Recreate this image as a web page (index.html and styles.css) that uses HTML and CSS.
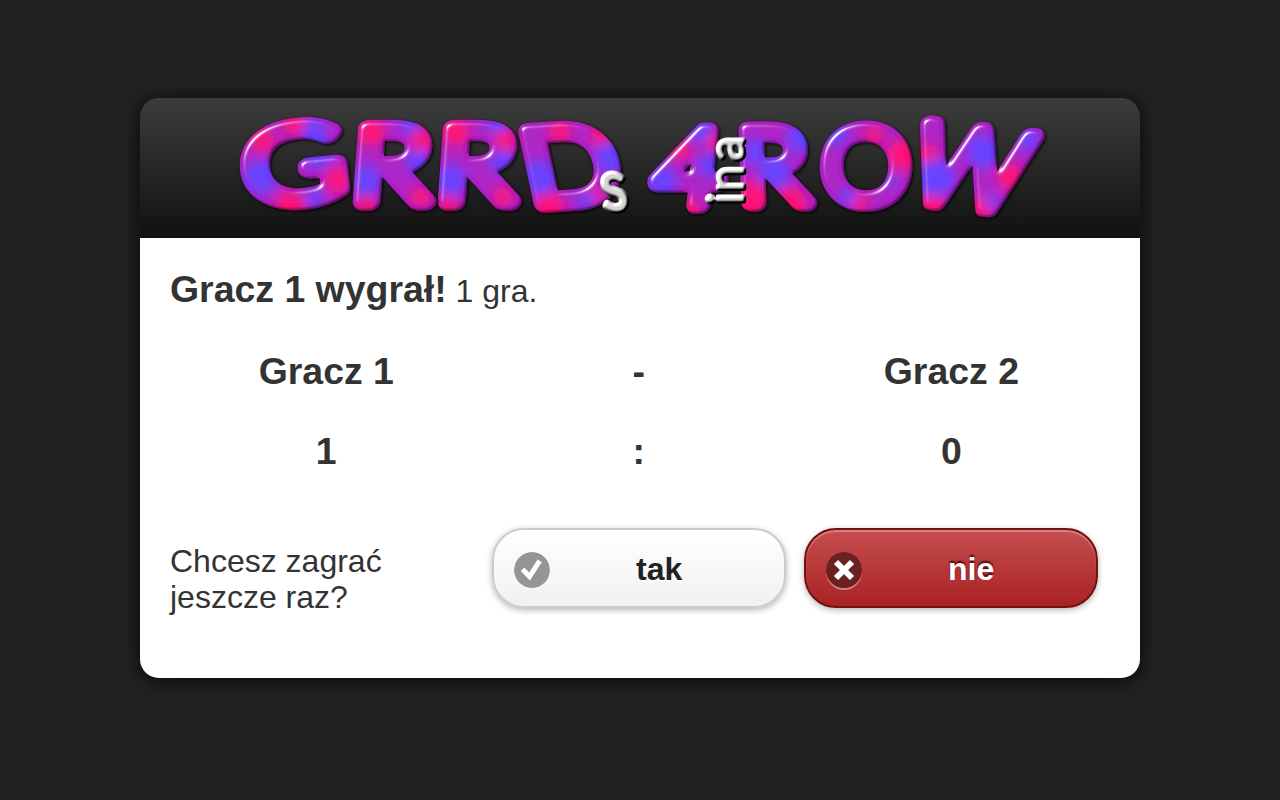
FILE: index.html
```html
<!DOCTYPE html>
<html lang="pl">
<head>
<meta charset="utf-8">
<title>GRRDs 4 in a ROW</title>
<link rel="stylesheet" href="styles.css">
</head>
<body>
<main class="dialog">
  <header class="dialog-header">
    <svg class="logo" viewBox="240 108 804 116" role="img" aria-label="GRRDs 4 in a ROW">
      <defs>
        <filter id="bevel" x="230" y="100" width="824" height="130" filterUnits="userSpaceOnUse" color-interpolation-filters="sRGB">
          <feGaussianBlur in="SourceAlpha" stdDeviation="2.4" result="soft"/>
          <feSpecularLighting in="soft" surfaceScale="5" specularConstant="1.15" specularExponent="28" lighting-color="#fff" result="shine">
            <feDistantLight azimuth="225" elevation="34"/>
          </feSpecularLighting>
          <feComposite in="shine" in2="SourceAlpha" operator="in" result="shineIn"/>
          <feGaussianBlur in="SourceAlpha" stdDeviation="1.5" result="edge"/>
          <feOffset in="edge" dx="-2" dy="-2" result="inset"/>
          <feComposite in="SourceAlpha" in2="inset" operator="out" result="rim"/>
          <feComponentTransfer in="rim" result="shade"><feFuncA type="linear" slope=".62" intercept="-.1"/></feComponentTransfer>
          <feOffset in="edge" dx="1" dy="1" result="shadow"/>
          <feMerge>
            <feMergeNode in="shadow"/><feMergeNode in="SourceGraphic"/><feMergeNode in="shade"/><feMergeNode in="shineIn"/>
          </feMerge>
        </filter>
        <filter id="metal" x="590" y="120" width="180" height="105" filterUnits="userSpaceOnUse" color-interpolation-filters="sRGB">
          <feGaussianBlur in="SourceAlpha" stdDeviation="1.6" result="soft"/>
          <feDiffuseLighting in="soft" surfaceScale="4" diffuseConstant="1.25" lighting-color="#fff" result="light">
            <feDistantLight azimuth="225" elevation="42"/>
          </feDiffuseLighting>
          <feComposite in="light" in2="SourceAlpha" operator="in"/>
        </filter>
        <filter id="mottle" x="-30%" y="-30%" width="160%" height="160%"><feGaussianBlur stdDeviation="6"/></filter>
        <mask id="lettersA" maskUnits="userSpaceOnUse" x="230" y="100" width="824" height="130">
          <g class="letter">
            <text transform="translate(298 201) rotate(-6) scale(1.36 1.02)">G</text>
            <text transform="translate(474 202) skewX(-4) scale(1.26 1.02)">R</text>
            <text transform="translate(686 205) skewX(-6) scale(1.15 1.02)">4</text>
            <text transform="translate(866 203) scale(1.08 1.01)">O</text>
          </g>
        </mask>
        <mask id="lettersB" maskUnits="userSpaceOnUse" x="230" y="100" width="824" height="130">
          <g class="letter">
            <text transform="translate(389 202) skewX(-4) scale(1.26 1.02)">R</text>
            <text transform="translate(578 202) rotate(-4) skewX(8) scale(1.21 1.02)">D</text>
            <text transform="translate(774 203) skewX(2) scale(1.14 1.01)">R</text>
            <text transform="translate(961 205) rotate(7) skewX(-9) scale(1.08 1.06)">W</text>
          </g>
        </mask>
        <g id="paint">
          <rect x="230" y="100" width="824" height="130" fill="#ac1fc4"/>
          <g filter="url(#mottle)">
            <g fill="#ff0874">
              <circle cx="262" cy="140" r="12"/><circle cx="294" cy="124" r="11"/><circle cx="338" cy="180" r="13"/><circle cx="290" cy="207" r="15"/>
              <circle cx="371" cy="132" r="14"/><circle cx="422" cy="140" r="11"/><circle cx="366" cy="207" r="10"/><circle cx="420" cy="197" r="10"/>
              <circle cx="455" cy="132" r="14"/><circle cx="505" cy="140" r="11"/><circle cx="448" cy="207" r="10"/><circle cx="503" cy="197" r="10"/>
              <circle cx="560" cy="132" r="11"/><circle cx="602" cy="134" r="11"/><circle cx="550" cy="209" r="15"/><circle cx="594" cy="197" r="10"/>
              <circle cx="680" cy="150" r="10"/><circle cx="713" cy="140" r="9"/><circle cx="688" cy="210" r="12"/><circle cx="752" cy="200" r="18"/>
              <circle cx="791" cy="204" r="16"/><circle cx="903" cy="155" r="16"/><circle cx="874" cy="135" r="9"/><circle cx="856" cy="203" r="11"/>
              <circle cx="929" cy="153" r="9"/><circle cx="932" cy="207" r="13"/><circle cx="1010" cy="177" r="13"/><circle cx="981" cy="207" r="12"/>
            </g>
            <g fill="#643cff">
              <circle cx="261" cy="177" r="17"/><circle cx="314" cy="131" r="12"/><circle cx="318" cy="153" r="15"/><circle cx="314" cy="198" r="9"/>
              <circle cx="366" cy="180" r="15"/><circle cx="410" cy="124" r="10"/><circle cx="418" cy="162" r="12"/><circle cx="452" cy="180" r="15"/>
              <circle cx="497" cy="124" r="10"/><circle cx="502" cy="162" r="12"/><circle cx="540" cy="177" r="17"/><circle cx="611" cy="157" r="16"/>
              <circle cx="587" cy="200" r="9"/><circle cx="662" cy="181" r="15"/><circle cx="701" cy="130" r="12"/><circle cx="710" cy="165" r="12"/>
              <circle cx="755" cy="151" r="13"/><circle cx="801" cy="138" r="15"/><circle cx="775" cy="173" r="16"/><circle cx="836" cy="135" r="11"/>
              <circle cx="848" cy="198" r="9"/><circle cx="892" cy="181" r="6"/><circle cx="936" cy="178" r="19"/><circle cx="983" cy="151" r="17"/>
              <circle cx="1028" cy="140" r="11"/><circle cx="990" cy="201" r="7"/>
            </g>
          </g>
        </g>
      </defs>
      <g filter="url(#bevel)"><use href="#paint" mask="url(#lettersA)"/></g>
      <g filter="url(#bevel)"><use href="#paint" mask="url(#lettersB)"/></g>
      <g class="small-letter" filter="url(#metal)">
        <text transform="translate(617 210) skewX(8) scale(1.1 1.26)">s</text>
        <text transform="translate(744 199) rotate(-90) scale(.9)">i</text>
        <text transform="translate(744 179) rotate(-90) scale(.85 .9)">n</text>
        <text transform="translate(744 149) rotate(-90) scale(.9)">a</text>
      </g>
    </svg>
  </header>
  <section class="dialog-body">
    <p class="result"><strong>Gracz 1 wygrał!</strong> 1 gra.</p>
    <div class="score">
      <span>Gracz 1</span><span>-</span><span>Gracz 2</span>
      <span>1</span><span>:</span><span>0</span>
    </div>
    <div class="actions">
      <p class="question">Chcesz zagrać jeszcze raz?</p>
      <button class="button button-yes" type="button">
        <svg class="icon" viewBox="0 0 36 36"><circle cx="18" cy="18" r="18" fill="#959595"/><path d="M8.5 17.2 15.5 24.5 25.7 8.8" fill="none" stroke="#fff" stroke-width="5"/></svg>
        tak
      </button>
      <button class="button button-no" type="button">
        <svg class="icon icon-no" viewBox="0 0 36 36"><circle cx="18" cy="18" r="18" fill="#6b2021"/><path d="m10 10 16 16M26 10 10 26" fill="none" stroke="#fff" stroke-width="6"/></svg>
        nie
      </button>
    </div>
  </section>
</main>
</body>
</html>
```
FILE: styles.css
```css
* { box-sizing: border-box; }

body {
  margin: 0;
  padding-top: 98px;
  min-height: 800px;
  background: #222;
  color: #333;
  font: 32px/36px "Liberation Sans", Arial, sans-serif;
}

p { margin: 0; }

.dialog {
  width: 1000px;
  height: 580px;
  margin: 0 auto;
  border-radius: 19px;
  background: linear-gradient(#3c3c3c, #111 140px, #fff 140px);
  box-shadow: 0 2px 20px rgba(0, 0, 0, .85);
  overflow: hidden;
}

.dialog-header {
  height: 140px;
  padding: 10px 96px 0 100px;
}

.logo { display: block; width: 804px; height: 116px; overflow: visible; }

.letter text {
  font: 300 102px Lato, sans-serif;
  text-anchor: middle;
  fill: #fff;
  stroke: #fff;
  stroke-width: 17px;
  stroke-linejoin: round;
}

.small-letter text {
  font: 400 56px Lato, sans-serif;
  text-anchor: middle;
  fill: #ccc;
  stroke: #ccc;
  stroke-width: 5px;
  stroke-linejoin: round;
}

.dialog-body { padding: 29px 30px 30px; }

.result { height: 64px; line-height: 44px; }
.result strong { font-size: 37.44px; }

.score {
  display: grid;
  grid-template-columns: repeat(3, 312.55px);
  grid-auto-rows: 80px;
  line-height: 80px;
  text-align: center;
  font-size: 37.44px;
  font-weight: bold;
}

.actions { display: flex; margin-top: 37px; }

.question { width: 322px; padding: 15px 60px 0 0; }

.button {
  position: relative;
  width: 294px;
  height: 80px;
  margin: 0 18px 0 0;
  padding: 2px 0 0 142px;
  border: 2px solid #ccc;
  border-radius: 32px;
  display: flex;
  align-items: center;
  font: bold 32px/40px "Liberation Sans", Arial, sans-serif;
  box-shadow: 0 2px 6px rgba(0, 0, 0, .3);
}

.button-yes {
  color: #222;
  background: linear-gradient(#fff, #f1f1f1);
  text-shadow: 0 2px 0 #fff;
}

.button-no {
  margin-right: 0;
  border-color: #74100f;
  color: #fff;
  background: linear-gradient(#c54e4f, #a92224);
  text-shadow: 0 -2px 2px #4d0505;
  box-shadow: inset 0 2px 1px rgba(255, 255, 255, .3), 0 2px 6px rgba(0, 0, 0, .3);
}

.icon {
  position: absolute;
  left: 20px;
  top: 22px;
  width: 36px;
  height: 36px;
  border-radius: 50%;
}

.icon-no { box-shadow: 0 2px 0 rgba(255, 255, 255, .4); }
```
